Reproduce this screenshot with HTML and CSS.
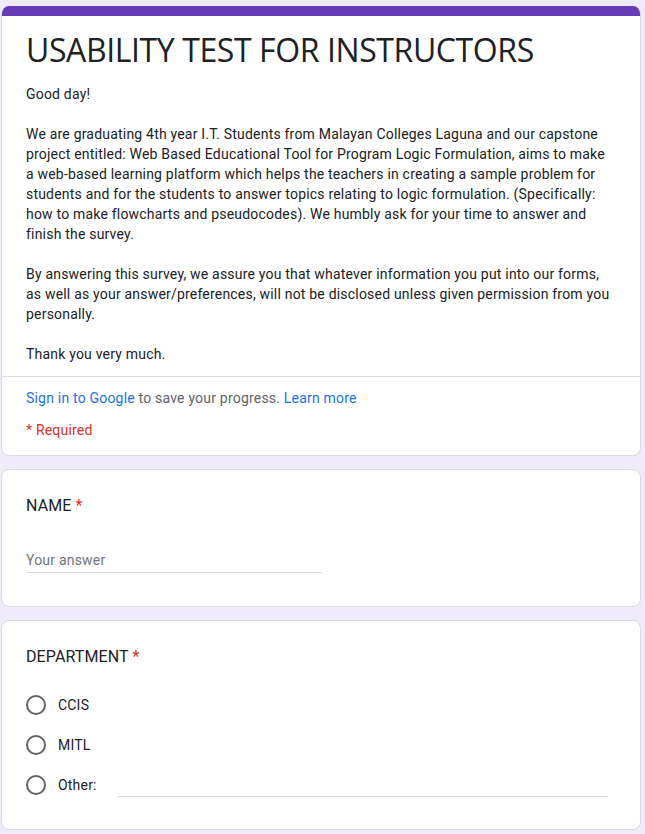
FILE: index.html
```html
<!DOCTYPE html>
<html lang="en">
<head>
<meta charset="utf-8">
<title>USABILITY TEST FOR INSTRUCTORS</title>
<link rel="stylesheet" href="styles.css">
</head>
<body>
<div class="page">
  <div class="card header-card">
    <div class="band"></div>
    <div class="header-main">
      <h1 class="title">USABILITY TEST FOR INSTRUCTORS</h1>
      <div class="desc">
        <p>Good day!</p>
        <p>We are graduating 4th year I.T. Students from Malayan Colleges Laguna and our capstone project entitled: Web Based Educational Tool for Program Logic Formulation, aims to make a web-based learning platform which helps the teachers in creating a sample problem for students and for the students to answer topics relating to logic formulation. (Specifically: how to make flowcharts and pseudocodes). We humbly ask for your time to answer and finish the survey.</p>
        <p>By answering this survey, we assure you that whatever information you put into our forms, as well as your answer/preferences, will not be disclosed unless given permission from you personally.</p>
        <p>Thank you very much.</p>
      </div>
    </div>
    <div class="header-foot">
      <div class="signin"><a class="link" href="#">Sign in to Google</a> to save your progress. <a class="link" href="#">Learn more</a></div>
      <div class="required">* Required</div>
    </div>
  </div>

  <div class="card question text-question">
    <div class="q-label">NAME <span class="star">*</span></div>
    <div class="text-input"><span class="placeholder">Your answer</span></div>
  </div>

  <div class="card question">
    <div class="q-label">DEPARTMENT <span class="star">*</span></div>
    <div class="options">
      <div class="option"><span class="radio"></span><span class="opt-text">CCIS</span></div>
      <div class="option"><span class="radio"></span><span class="opt-text">MITL</span></div>
      <div class="option"><span class="radio"></span><span class="opt-text">Other:</span><span class="other-line"></span></div>
    </div>
  </div>
</div>
</body>
</html>
```
FILE: styles.css
```css
* { box-sizing: border-box; }
html, body { margin: 0; padding: 0; }
body {
  background: #f0ebf8;
  font-family: Roboto, "Liberation Sans", Arial, sans-serif;
  color: #202124;
  width: 645px;
  overflow: hidden;
  letter-spacing: 0.2px;
}
.page {
  width: 640px;
  margin-left: 1px;
  padding-top: 6px;
  display: flex;
  flex-direction: column;
  gap: 13px;
}
.card {
  background: #fff;
  border: 1px solid #dadce0;
  border-radius: 8px;
  overflow: hidden;
}
.header-card { border-top: none; }
.band { height: 10px; background: #673ab7; }
.header-main { padding: 14px 24px 12px; }
.title {
  margin: 0 0 14px;
  font-family: "Open Sans", sans-serif;
  font-weight: 400;
  font-size: 32px;
  line-height: 40px;
  letter-spacing: -0.4px;
  color: #202124;
}
.desc p {
  margin: 0 0 20px;
  font-size: 14px;
  line-height: 20px;
}
.desc p:last-child { margin-bottom: 0; }
.header-foot {
  border-top: 1px solid #dadce0;
  padding: 11px 24px 15px;
  font-size: 14px;
  line-height: 20px;
}
.signin { color: #5f6368; }
.link { color: #1a73e8; text-decoration: none; }
.required { color: #d93025; margin-top: 12px; }
.question { padding: 24px 24px 24px; }
.text-question { padding-bottom: 25px; }
.q-label { font-size: 16px; line-height: 24px; color: #202124; letter-spacing: 0.1px; }
.star { color: #d93025; }
.text-input {
  width: 296px;
  margin-top: 30px;
  margin-bottom: 8px;
  border-bottom: 1px solid #dadce0;
  font-size: 14px;
  line-height: 24px;
}
.placeholder { color: #70757a; }
.options { margin-top: 16px; display: flex; flex-direction: column; }
.option {
  height: 40px;
  display: flex;
  align-items: center;
  font-size: 14px;
}
.radio {
  width: 20px;
  height: 20px;
  border: 2px solid #5f6368;
  border-radius: 50%;
  flex: none;
}
.opt-text { margin-left: 12px; }
.other-line {
  flex: 1;
  height: 1px;
  background: #dadce0;
  margin: 22px 8px 0 20px;
}
```
